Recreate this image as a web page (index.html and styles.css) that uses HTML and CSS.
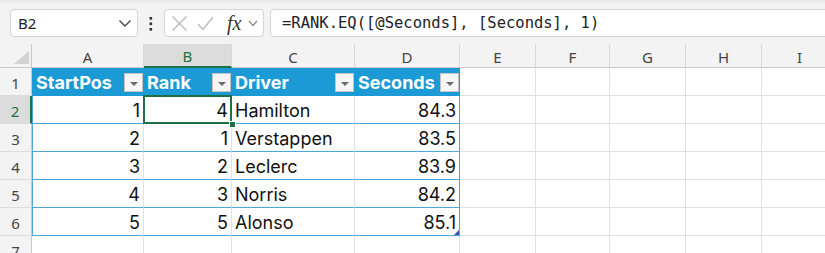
FILE: index.html
```html
<!DOCTYPE html>
<html lang="en">
<head>
    <meta charset="UTF-8">
    <meta name="viewport" content="width=device-width, initial-scale=1.0">
    <title>Race Rank</title>
    <link rel="stylesheet" href="styles.css">
</head>
<body>
    <div class="toolbar">
        <div class="namebox">
            <span>B2</span>
            <svg class="chev" width="14" height="10" viewBox="0 0 14 10"><polyline points="1.5,2.5 7,8 12.5,2.5" fill="none" stroke="#444" stroke-width="1.4"/></svg>
        </div>
        <svg class="kebab" width="26" height="28" viewBox="0 0 26 28">
            <rect x="11.5" y="8" width="2.6" height="2.6" fill="#333"/>
            <rect x="11.5" y="13.5" width="2.6" height="2.6" fill="#333"/>
            <rect x="11.5" y="19" width="2.6" height="2.6" fill="#333"/>
        </svg>
        <div class="fxbox">
            <svg class="ico" width="17" height="28" viewBox="0 0 17 28"><path d="M1.5 7.5 L15.5 21.5 M15.5 7.5 L1.5 21.5" stroke="#b8b8b8" stroke-width="1.3" fill="none"/></svg>
            <svg class="ico ok" width="17" height="28" viewBox="0 0 17 28"><path d="M1 15 L6 20.5 L16 8" stroke="#b8b8b8" stroke-width="1.3" fill="none"/></svg>
            <span class="fx">fx</span>
            <svg class="ico small" width="10" height="28" viewBox="0 0 10 28"><polyline points="1,12 5,16.5 9,12" fill="none" stroke="#888" stroke-width="1.2"/></svg>
        </div>
        <div class="formula">=RANK.EQ([@Seconds], [Seconds], 1)</div>
    </div>

    <div class="sheet">
        <!-- column headers -->
        <div class="cell corner"><div class="tri"></div></div>
        <div class="cell ch">A</div>
        <div class="cell ch active">B</div>
        <div class="cell ch">C</div>
        <div class="cell ch">D</div>
        <div class="cell ch">E</div>
        <div class="cell ch">F</div>
        <div class="cell ch">G</div>
        <div class="cell ch">H</div>
        <div class="cell ch">I</div>

        <!-- row 1: table header -->
        <div class="cell rh">1</div>
        <div class="cell th first">StartPos<span class="dd"></span></div>
        <div class="cell th">Rank<span class="dd"></span></div>
        <div class="cell th">Driver<span class="dd"></span></div>
        <div class="cell th last">Seconds<span class="dd"></span></div>
        <div class="cell"></div><div class="cell"></div><div class="cell"></div><div class="cell"></div><div class="cell"></div>

        <!-- row 2 -->
        <div class="cell rh active">2</div>
        <div class="cell td first num">1</div>
        <div class="cell td num sel">4</div>
        <div class="cell td">Hamilton</div>
        <div class="cell td last num">84.3</div>
        <div class="cell"></div><div class="cell"></div><div class="cell"></div><div class="cell"></div><div class="cell"></div>

        <!-- row 3 -->
        <div class="cell rh">3</div>
        <div class="cell td first num">2</div>
        <div class="cell td num">1</div>
        <div class="cell td">Verstappen</div>
        <div class="cell td last num">83.5</div>
        <div class="cell"></div><div class="cell"></div><div class="cell"></div><div class="cell"></div><div class="cell"></div>

        <!-- row 4 -->
        <div class="cell rh">4</div>
        <div class="cell td first num">3</div>
        <div class="cell td num">2</div>
        <div class="cell td">Leclerc</div>
        <div class="cell td last num">83.9</div>
        <div class="cell"></div><div class="cell"></div><div class="cell"></div><div class="cell"></div><div class="cell"></div>

        <!-- row 5 -->
        <div class="cell rh">5</div>
        <div class="cell td first num">4</div>
        <div class="cell td num">3</div>
        <div class="cell td">Norris</div>
        <div class="cell td last num">84.2</div>
        <div class="cell"></div><div class="cell"></div><div class="cell"></div><div class="cell"></div><div class="cell"></div>

        <!-- row 6 -->
        <div class="cell rh">6</div>
        <div class="cell td first num">5</div>
        <div class="cell td num">5</div>
        <div class="cell td">Alonso</div>
        <div class="cell td last num end">85.1</div>
        <div class="cell"></div><div class="cell"></div><div class="cell"></div><div class="cell"></div><div class="cell"></div>

        <!-- row 7 -->
        <div class="cell rh">7</div>
        <div class="cell"></div><div class="cell"></div><div class="cell"></div><div class="cell"></div>
        <div class="cell"></div><div class="cell"></div><div class="cell"></div><div class="cell"></div><div class="cell"></div>
    </div>
</body>
</html>
```

FILE: styles.css
```css
:root {
    --grid: #e1e1e1;
    --head-bg: #f3f3f3;
    --table-blue: #1b9ad6;
    --row-line: #4ea6de;
    --green: #1e7145;
}

body {
    margin: 0;
    background: var(--head-bg);
    font-family: 'Noto Sans', sans-serif;
    overflow: hidden;
    width: 825px;
    height: 253px;
}

/* Formula bar */
.toolbar {
    display: flex;
    align-items: center;
    height: 44px;
    box-sizing: border-box;
    padding: 9px 0 7px 10px;
    border-top: 3px solid #ebebeb;
    padding-top: 6px;
}

.namebox,
.fxbox,
.formula {
    height: 28px;
    box-sizing: border-box;
    background: #fff;
    border: 1px solid #d4d4d4;
    border-radius: 4px;
    display: flex;
    align-items: center;
}

.namebox {
    width: 128px;
    padding: 0 5px 0 7px;
    justify-content: space-between;
    font-size: 15px;
    color: #222;
}

.kebab {
    display: block;
}

.fxbox {
    width: 100px;
    padding-left: 6px;
}

.ico {
    display: block;
    flex: none;
}

.ok {
    margin-left: 9px;
}

.fx {
    margin-left: 13px;
    font-family: 'Liberation Serif', serif;
    font-style: italic;
    font-size: 20px;
    color: #333;
    line-height: 1;
}

.small {
    margin-left: 7px;
}

.formula {
    flex: 1;
    margin-left: 6px;
    margin-right: -10px;
    padding-left: 11px;
    font-family: 'DejaVu Sans Mono', monospace;
    font-size: 15.5px;
    color: #222;
    white-space: nowrap;
}

/* Grid */
.sheet {
    display: grid;
    grid-template-columns: 32px 112px 88px 123px 105px 76px 74px 76px 76px 76px;
    grid-template-rows: 24px repeat(7, 28px);
    width: 838px;
    background: #fff;
}

.cell {
    box-sizing: border-box;
    border-right: 1px solid var(--grid);
    border-bottom: 1px solid var(--grid);
    display: flex;
    align-items: flex-end;
    padding: 0 3px 1px;
    font-family: Inter, sans-serif;
    font-size: 18px;
    line-height: 22px;
    color: #111;
    white-space: nowrap;
}

.corner {
    background: var(--head-bg);
    border-right-color: #c9c9c9;
    border-bottom-color: #c9c9c9;
    justify-content: flex-end;
    padding: 0 2px 3px 0;
}

.tri {
    width: 15px;
    height: 13px;
    background: #d3d3d3;
    clip-path: polygon(100% 0, 100% 100%, 0 100%);
}

.ch {
    background: var(--head-bg);
    border-right-color: #d8d8d8;
    border-bottom-color: #c9c9c9;
    justify-content: center;
    align-items: center;
    padding: 2px 0 0;
    font-family: 'Noto Sans', sans-serif;
    font-size: 15px;
    color: #444;
}

.ch.active {
    background: #dcdcdc;
    color: var(--green);
    border-bottom: 2px solid var(--green);
}

.rh {
    background: var(--head-bg);
    border-right-color: #c9c9c9;
    border-bottom-color: #dcdcdc;
    justify-content: center;
    align-items: center;
    padding: 2px 0 0;
    font-family: 'Noto Sans', sans-serif;
    font-size: 15px;
    color: #444;
}

.rh.active {
    background: #dcdcdc;
    color: var(--green);
    border-right: 2px solid var(--green);
}

/* Table */
.th {
    background: var(--table-blue);
    border-right-color: var(--table-blue);
    border-bottom-color: var(--table-blue);
    color: #fff;
    font-weight: 700;
    justify-content: space-between;
    padding-right: 0;
}

.dd {
    width: 19px;
    height: 19px;
    box-sizing: border-box;
    margin-bottom: 2px;
    border: 1px solid #c4c4c4;
    background: #f6f6f6;
    display: flex;
    justify-content: center;
    align-items: center;
    padding-top: 2px;
}

.dd::before {
    content: '';
    border-left: 4px solid transparent;
    border-right: 4px solid transparent;
    border-top: 4px solid #6a6a6a;
}

.td {
    border-bottom-color: var(--row-line);
}

.first {
    border-left: 1px solid var(--row-line);
}

.th.first {
    border-left-color: var(--table-blue);
}

.last {
    border-right-color: var(--row-line);
}

.th.last {
    border-right-color: var(--table-blue);
}

.num {
    justify-content: flex-end;
}

/* Active cell */
.sel {
    position: relative;
}

.sel::after {
    content: '';
    position: absolute;
    left: -1px;
    top: -1px;
    right: -1px;
    bottom: -1px;
    border: 2px solid var(--green);
}

.sel::before {
    content: '';
    position: absolute;
    right: -5px;
    bottom: -5px;
    width: 5px;
    height: 5px;
    background: var(--green);
    border: 1px solid #fff;
    z-index: 1;
}

/* Table resize handle */
.end {
    position: relative;
}

.end::after {
    content: '';
    position: absolute;
    right: 0;
    bottom: 0;
    width: 5px;
    height: 5px;
    background: #3b4fb6;
    clip-path: polygon(100% 0, 100% 100%, 0 100%);
}
```
